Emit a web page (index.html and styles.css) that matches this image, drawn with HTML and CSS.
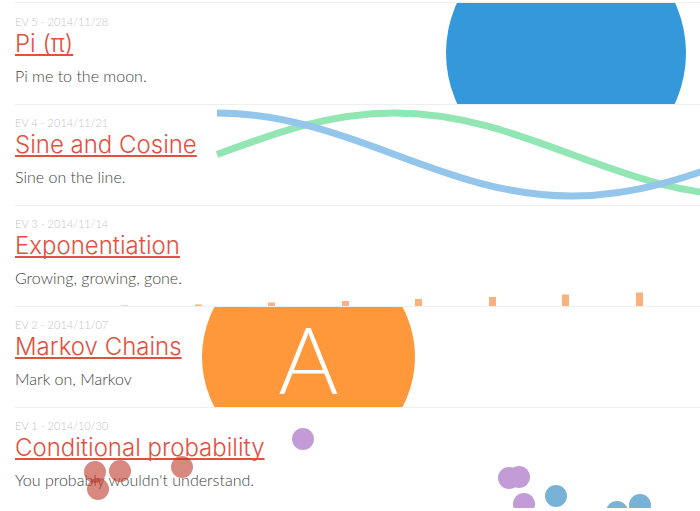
FILE: index.html
```html
<!DOCTYPE html>
<html lang="en">
<head>
<meta charset="utf-8">
<title>Explained Visually</title>
<link rel="stylesheet" href="styles.css">
</head>
<body>
<main class="posts">
  <article class="post">
    <p class="meta">EV 5 - 2014/11/28</p>
    <h2 class="title"><a href="#pi">Pi (π)</a></h2>
    <p class="summary">Pi me to the moon.</p>
    <svg class="art" aria-hidden="true">
      <circle class="pi-disc" cx="551" cy="50" r="120"/>
    </svg>
  </article>
  <article class="post">
    <p class="meta">EV 4 - 2014/11/21</p>
    <h2 class="title"><a href="#sine">Sine and Cosine</a></h2>
    <p class="summary">Sine on the line.</p>
    <svg class="art" aria-hidden="true">
      <path class="wave sine" d="M202 49.500C260 28 315 8 379.500 8C444 8 499 28 557 49.500C615 71 670 91 734.500 91"/>
      <path class="wave cosine" d="M202 8C266 8 322 28 379.500 49.500C437 71 492 91 557 91C621 91 677 71 734.500 49.500"/>
    </svg>
  </article>
  <article class="post">
    <p class="meta">EV 3 - 2014/11/14</p>
    <h2 class="title"><a href="#exp">Exponentiation</a></h2>
    <p class="summary">Growing, growing, gone.</p>
    <svg class="art" aria-hidden="true">
      <g class="bars">
        <rect x="106" y="99.500" width="7" height="0.5"/>
        <rect x="180" y="98.500" width="7" height="1.5"/>
        <rect x="253" y="96.500" width="7" height="3.5"/>
        <rect x="327" y="95" width="7" height="5"/>
        <rect x="400" y="93" width="7" height="7"/>
        <rect x="474" y="91" width="7" height="9"/>
        <rect x="547" y="88.500" width="7" height="11.5"/>
        <rect x="621" y="86.500" width="7" height="13.5"/>
      </g>
    </svg>
  </article>
  <article class="post">
    <p class="meta">EV 2 - 2014/11/07</p>
    <h2 class="title"><a href="#markov">Markov Chains</a></h2>
    <p class="summary">Mark on, Markov</p>
    <svg class="art art-open" aria-hidden="true">
      <clipPath id="row-clip"><rect width="100%" height="100%"/></clipPath>
      <g clip-path="url(#row-clip)">
        <circle class="state" cx="293.500" cy="50" r="106.5"/>
      </g>
      <text class="state-name" x="293.500" y="87">A</text>
    </svg>
  </article>
  <article class="post">
    <p class="meta">EV 1 - 2014/10/30</p>
    <h2 class="title"><a href="#conditional">Conditional probability</a></h2>
    <p class="summary">You probably wouldn't understand.</p>
    <svg class="art" aria-hidden="true">
      <g class="balls-red">
        <circle cx="80" cy="64" r="11"/>
        <circle cx="105" cy="63" r="11"/>
        <circle cx="83" cy="81" r="11"/>
        <circle cx="167" cy="59" r="11"/>
      </g>
      <g class="balls-purple">
        <circle cx="288" cy="31" r="11"/>
        <circle cx="494" cy="70" r="11"/>
        <circle cx="504" cy="69" r="11"/>
        <circle cx="509" cy="96" r="11"/>
      </g>
      <g class="balls-blue">
        <circle cx="541" cy="88" r="11"/>
        <circle cx="602" cy="104" r="11"/>
        <circle cx="625" cy="97" r="11"/>
      </g>
    </svg>
  </article>
</main>
</body>
</html>
```
FILE: styles.css
```css
body {
  margin: 0;
  background: #fff;
  color: #444;
  font-family: Lato, "Liberation Sans", sans-serif;
}

.posts {
  padding: 3px 0 0 15px;
}

.post {
  position: relative;
  padding: 10px 0 16px;
  border-bottom: 1px solid #efefef;
}

.post:first-child {
  padding-top: 11px;
  box-shadow: 0 -1px #efefef;
}

.post:last-child {
  border-bottom: 0;
}

.meta,
.title,
.summary {
  margin: 0;
}

.meta {
  color: #c4c4c4;
  font-size: 11px;
  font-weight: 300;
  line-height: 16px;
}

.title {
  font-family: Inter, "Liberation Sans", sans-serif;
  font-size: 24px;
  font-weight: 300;
  line-height: 28px;
}

.title a {
  color: #e3503f;
  text-decoration: underline;
  text-decoration-thickness: 2px;
  text-underline-offset: 2px;
  text-decoration-skip-ink: none;
}

.summary {
  padding-top: 6px;
  font-size: 16px;
  font-weight: 300;
  line-height: 24px;
}

.art {
  position: absolute;
  inset: 0;
  width: 100%;
  height: 100%;
  overflow: hidden;
  pointer-events: none;
}

.art-open {
  overflow: visible;
}

.pi-disc {
  fill: #3498db;
}

.wave {
  fill: none;
  stroke-width: 7px;
}

.sine {
  stroke: #91e6b3;
}

.cosine {
  stroke: #94c6ec;
}

.bars {
  fill: #f9b27d;
}

.state {
  fill: #ff983b;
}

.state-name {
  fill: #fff;
  font-size: 92px;
  font-weight: 300;
  text-anchor: middle;
}

.balls-red {
  fill: rgba(192, 57, 43, 0.6);
}

.balls-purple {
  fill: #c39bd6;
}

.balls-blue {
  fill: #79b2d7;
}
```
